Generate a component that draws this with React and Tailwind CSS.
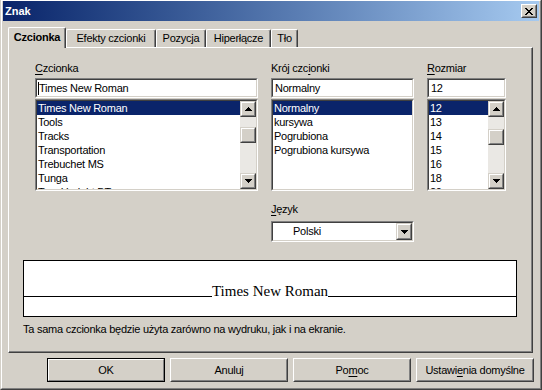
import React from 'react';

const UP = "M3 0h1v1h1v1h1v1h1v1H0V3h1V2h1V1h1z";
const DOWN = "M0 0h7v1H6v1H5v1H4v1H3V3H2V2H1V1H0z";
const XP = "M0 0h2v1H0z M6 0h2v1H6z M1 1h2v1H1z M5 1h2v1H5z M2 2h4v1H2z M3 3h2v1H3z M2 4h4v1H2z M1 5h2v1H1z M5 5h2v1H5z M0 6h2v1H0z M6 6h2v1H6z";

function Glyph({ d, w, h }) {
  return (
    <svg width={w} height={h} viewBox={`0 0 ${w} ${h}`} shapeRendering="crispEdges">
      <path d={d} fill="#000" />
    </svg>
  );
}

function ScrollBtn({ className = '', children }) {
  return (
    <div className={`border border-t-[#d4d0c8] border-l-[#d4d0c8] border-r-[#404040] border-b-[#404040] bg-[#d4d0c8] ${className}`}>
      <div className="h-full w-full border border-t-white border-l-white border-r-[#808080] border-b-[#808080] flex items-center justify-center">
        {children}
      </div>
    </div>
  );
}

function Sunken({ className = '', innerClass = '', children }) {
  return (
    <div className={`border border-t-[#808080] border-l-[#808080] border-r-white border-b-white ${className}`}>
      <div className={`h-full border border-t-[#404040] border-l-[#404040] border-r-[#d4d0c8] border-b-[#d4d0c8] bg-white ${innerClass}`}>
        {children}
      </div>
    </div>
  );
}

function Scrollbar({ thumbTop }) {
  return (
    <div className="w-[16px] h-full flex flex-col shrink-0">
      <ScrollBtn className="w-[16px] h-[16px] shrink-0"><Glyph d={UP} w={7} h={4} /></ScrollBtn>
      <div className="flex-1 bg-[#eae8e4] flex flex-col">
        <ScrollBtn className={`w-[16px] h-[16px] ${thumbTop}`} />
      </div>
      <ScrollBtn className="w-[16px] h-[16px] shrink-0"><Glyph d={DOWN} w={7} h={4} /></ScrollBtn>
    </div>
  );
}

function ListBox({ items, sel = 0, scroll, thumbTop }) {
  return (
    <Sunken className="h-[92px] mt-[1px]" innerClass="flex overflow-hidden">
      <div className="flex-1 min-w-0 overflow-hidden">
        {items.map((t, i) => (
          <div
            key={i}
            className={`h-[14px] leading-[14px] pl-[1px] whitespace-nowrap ${i === sel ? 'bg-[#0a246a] text-white' : ''}`}
          >
            {t}
          </div>
        ))}
      </div>
      {scroll && <Scrollbar thumbTop={thumbTop} />}
    </Sunken>
  );
}

function Field({ children }) {
  return (
    <Sunken className="h-[20px] mt-[3px]" innerClass="flex items-center pl-[1px] leading-[13px] whitespace-nowrap">
      {children}
    </Sunken>
  );
}

function Label({ children }) {
  return <div className="h-[13px] leading-[13px] whitespace-nowrap">{children}</div>;
}

function Tab({ active, w, children }) {
  if (active) {
    return (
      <div className={`${w} h-[21px] -mb-px relative z-10 bg-[#d4d0c8] border-t border-l border-t-white border-l-white border-r border-r-[#404040] rounded-tl-[2px] rounded-tr-[2px] shadow-[inset_-1px_0_#808080] flex items-center justify-center font-bold pb-[2px]`}>
        {children}
      </div>
    );
  }
  return (
    <div className={`${w} h-[18px] border-t border-l border-t-white border-l-white border-r border-r-[#404040] rounded-tl-[2px] rounded-tr-[2px] shadow-[inset_-1px_0_#808080] flex items-center justify-center`}>
      {children}
    </div>
  );
}

function Button({ def, children }) {
  if (def) {
    return (
      <div className="w-[118px] h-[24px] border border-black">
        <div className="h-full border border-t-white border-l-white border-r-[#808080] border-b-[#808080] flex items-center justify-center">
          {children}
        </div>
      </div>
    );
  }
  return (
    <div className="w-[118px] h-[24px] border border-t-white border-l-white border-r-[#404040] border-b-[#404040]">
      <div className="h-full border border-t-[#d4d0c8] border-l-[#d4d0c8] border-r-[#808080] border-b-[#808080] flex items-center justify-center">
        {children}
      </div>
    </div>
  );
}

export default function App() {
  return (
    <div className="w-[542px] h-[390px] bg-[#d4d0c8] border-l border-l-[#d4d0c8] border-r border-r-[#404040] border-b border-b-[#404040] font-['Liberation_Sans',Arial,sans-serif] text-[11px] tracking-[-0.25px] text-black select-none">
      <div className="h-full border-l border-t border-l-white border-t-white border-r border-b border-r-[#808080] border-b-[#808080] px-px">
        {/* Title bar */}
        <div className="h-[20px] bg-linear-to-r from-[#0a246a] to-[#a6caf0] flex items-center justify-between pl-[2px] pr-[2px]">
          <span className="text-white font-bold text-[11px] tracking-normal">Znak</span>
          <div className="w-[16px] h-[14px] border border-t-white border-l-white border-r-[#404040] border-b-[#404040] bg-[#d4d0c8]">
            <div className="h-full border border-t-[#d4d0c8] border-l-[#d4d0c8] border-r-[#808080] border-b-[#808080] flex items-center justify-center">
              <Glyph d={XP} w={8} h={7} />
            </div>
          </div>
        </div>

        {/* Tabs */}
        <div className="ml-[5px] mt-[6px] flex items-end h-[20px]">
          <Tab active w="w-[58px]">Czcionka</Tab>
          <Tab w="w-[90px]">Efekty czcionki</Tab>
          <Tab w="w-[50px]">Pozycja</Tab>
          <Tab w="w-[65px]">Hiperłącze</Tab>
          <Tab w="w-[27px]">Tło</Tab>
        </div>

        {/* Panel */}
        <div className="ml-[5px] w-[525px] h-[306px] border-t border-l border-t-white border-l-white border-r border-b border-r-[#404040] border-b-[#404040] shadow-[inset_-1px_-1px_#808080] flex flex-col">
          <div className="ml-[26px] mt-[14px] flex items-start gap-[13px]">
            <div className="w-[223px]">
              <Label><span className="underline underline-offset-[2px]">C</span>zcionka</Label>
              <Field>
                <span className="w-px h-[13px] bg-black shrink-0" />
                <span>Times New Roman</span>
              </Field>
              <ListBox
                scroll
                thumbTop="mt-[10px]"
                items={['Times New Roman', 'Tools', 'Tracks', 'Transportation', 'Trebuchet MS', 'Tunga', 'TypeUpright BT']}
              />
            </div>
            <div className="w-[143px]">
              <Label>Krój czc<span className="underline underline-offset-[2px]">i</span>onki</Label>
              <Field><span className="pl-px">Normalny</span></Field>
              <ListBox items={['Normalny', 'kursywa', 'Pogrubiona', 'Pogrubiona kursywa']} />
              <div className="mt-[12px]">
                <Label><span className="underline underline-offset-[2px]">J</span>ęzyk</Label>
              </div>
              <Sunken className="h-[21px] mt-[5px]" innerClass="flex items-center">
                <span className="flex-1 pl-[20px]">Polski</span>
                <ScrollBtn className="w-[16px] h-full shrink-0"><Glyph d={DOWN} w={7} h={4} /></ScrollBtn>
              </Sunken>
            </div>
            <div className="w-[79px]">
              <Label><span className="underline underline-offset-[2px]">R</span>ozmiar</Label>
              <Field><span className="pl-px">12</span></Field>
              <ListBox
                scroll
                thumbTop="mt-[12px]"
                items={['12', '13', '14', '15', '16', '18', '20']}
              />
            </div>
          </div>

          {/* Preview */}
          <div className="ml-[14px] mt-[18px] w-[494px] h-[57px] border border-black bg-white">
            <div className="h-[38px] flex items-end">
              <div className="flex-1 h-px bg-black mb-[2px]" />
              <span className="font-['Liberation_Serif','Times_New_Roman',serif] text-[15px] leading-[15px] tracking-normal whitespace-nowrap">Times New Roman</span>
              <div className="flex-1 h-px bg-black mb-[2px]" />
            </div>
          </div>

          <div className="ml-[14px] mt-[6px] leading-[13px] whitespace-nowrap">
            Ta sama czcionka będzie użyta zarówno na wydruku, jak i na ekranie.
          </div>
        </div>

        {/* Buttons */}
        <div className="ml-[44px] mt-[5px] flex gap-[5px]">
          <Button def>OK</Button>
          <Button>Anuluj</Button>
          <Button>Po<span className="underline underline-offset-[2px]">m</span>oc</Button>
          <Button>Ustawi<span className="underline underline-offset-[2px]">e</span>nia domyślne</Button>
        </div>
      </div>
    </div>
  );
}
